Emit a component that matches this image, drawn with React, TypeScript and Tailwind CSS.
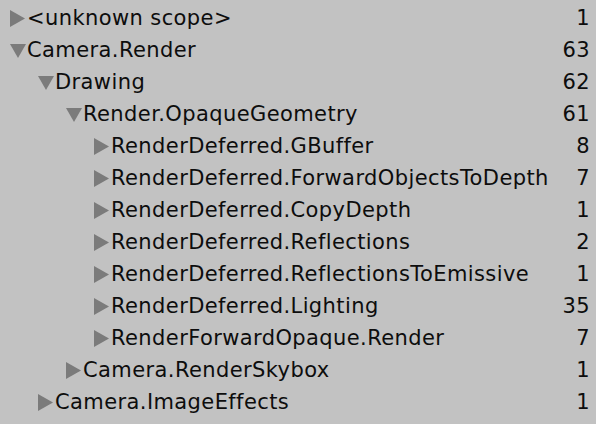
import React from "react";

type Row = { name: string; count: number; level: number; open: boolean };

const rows: Row[] = [
  { name: "<unknown scope>", count: 1, level: 0, open: false },
  { name: "Camera.Render", count: 63, level: 0, open: true },
  { name: "Drawing", count: 62, level: 1, open: true },
  { name: "Render.OpaqueGeometry", count: 61, level: 2, open: true },
  { name: "RenderDeferred.GBuffer", count: 8, level: 3, open: false },
  { name: "RenderDeferred.ForwardObjectsToDepth", count: 7, level: 3, open: false },
  { name: "RenderDeferred.CopyDepth", count: 1, level: 3, open: false },
  { name: "RenderDeferred.Reflections", count: 2, level: 3, open: false },
  { name: "RenderDeferred.ReflectionsToEmissive", count: 1, level: 3, open: false },
  { name: "RenderDeferred.Lighting", count: 35, level: 3, open: false },
  { name: "RenderForwardOpaque.Render", count: 7, level: 3, open: false },
  { name: "Camera.RenderSkybox", count: 1, level: 2, open: false },
  { name: "Camera.ImageEffects", count: 1, level: 1, open: false },
];

const indent = ["pl-[10px]", "pl-[38px]", "pl-[66px]", "pl-[94px]"];

const Arrow: React.FC<{ open: boolean }> = ({ open }) => (
  <svg width="16" height="17" viewBox="0 0 16 17" className="shrink-0">
    {open ? (
      <polygon points="0,2 16,2 8,16" fill="#7b7b7b" />
    ) : (
      <polygon points="0,0 15,8.5 0,17" fill="#7b7b7b" />
    )}
  </svg>
);

export default function App() {
  return (
    <div
      className="w-[596px] h-[424px] bg-[#c2c2c2] pt-[2px] overflow-hidden text-[#0d0d0d] text-[21px] tracking-[0.4px]"
      style={{ fontFamily: '"DejaVu Sans", sans-serif' }}
    >
      {rows.map((r) => (
        <div key={r.name} className={`h-8 flex items-center pr-[6px] ${indent[r.level]}`}>
          <Arrow open={r.open} />
          <span className="ml-[1px] flex-1 whitespace-nowrap leading-none">{r.name}</span>
          <span className="leading-none">{r.count}</span>
        </div>
      ))}
    </div>
  );
}
